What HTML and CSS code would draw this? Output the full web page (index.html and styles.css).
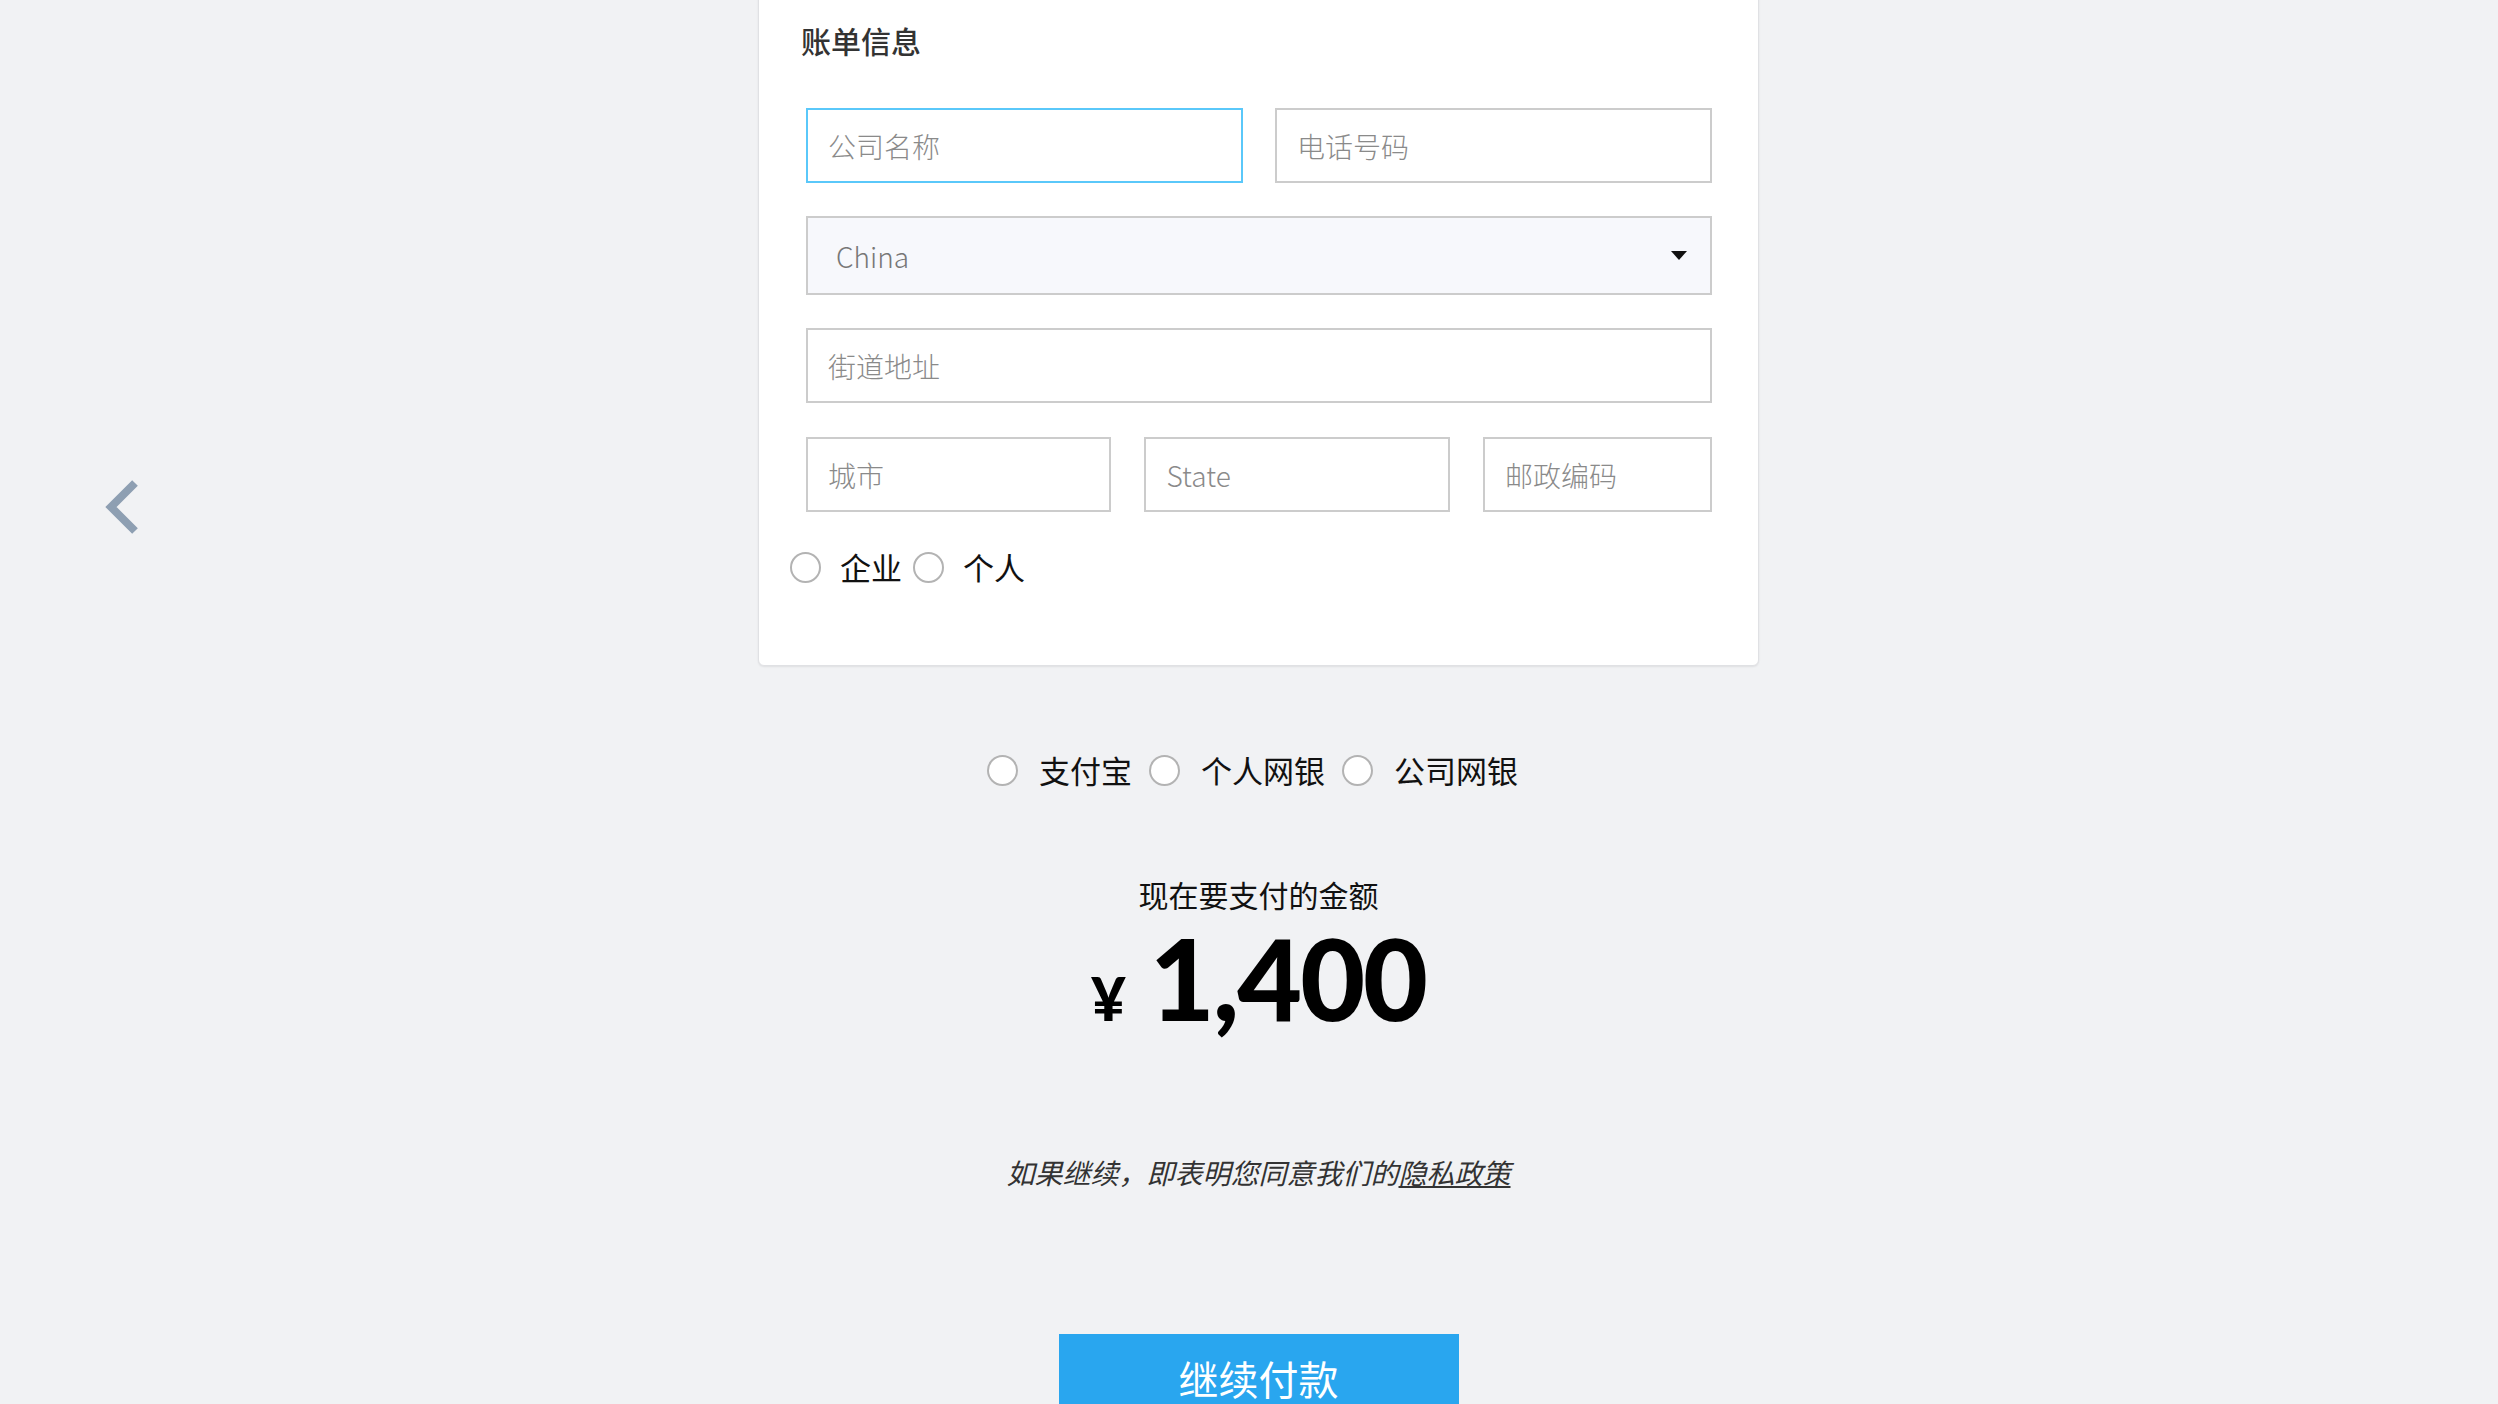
FILE: index.html
```html
<!DOCTYPE html>
<html lang="zh-CN">
<head>
    <meta charset="UTF-8">
    <meta name="viewport" content="width=device-width, initial-scale=1.0">
    <title>账单信息 - 付款</title>
    <link rel="stylesheet" href="styles.css">
</head>
<body>
    <a class="back-link" href="#" aria-label="返回">
        <svg width="40" height="60" viewBox="0 0 40 60">
            <polyline points="34,6 10,30 34,54" fill="none" stroke="#8e9fb2" stroke-width="8"></polyline>
        </svg>
    </a>

    <main class="checkout">
        <section class="card">
            <h2 class="card-title">账单信息</h2>

            <div class="fields">
                <div class="row row-two">
                    <input class="field is-active" type="text" placeholder="公司名称" autofocus>
                    <input class="field" type="text" placeholder="电话号码">
                </div>

                <div class="select-wrap">
                    <select class="field field-select">
                        <option>China</option>
                    </select>
                </div>

                <input class="field" type="text" placeholder="街道地址">

                <div class="row row-three">
                    <input class="field" type="text" placeholder="城市">
                    <input class="field" type="text" placeholder="State">
                    <input class="field" type="text" placeholder="邮政编码">
                </div>
            </div>

            <div class="radio-group card-radios">
                <label class="radio"><input type="radio" name="customer-type"><span>企业</span></label>
                <label class="radio"><input type="radio" name="customer-type"><span>个人</span></label>
            </div>
        </section>

        <div class="radio-group pay-methods">
            <label class="radio"><input type="radio" name="pay-method"><span>支付宝</span></label>
            <label class="radio"><input type="radio" name="pay-method"><span>个人网银</span></label>
            <label class="radio"><input type="radio" name="pay-method"><span>公司网银</span></label>
        </div>

        <div class="amount">
            <p class="amount-label">现在要支付的金额</p>
            <p class="amount-value"><span class="currency">¥</span><span class="sum">1,400</span></p>
        </div>

        <p class="terms">如果继续，即表明您同意我们的<a href="#">隐私政策</a></p>

        <button class="pay-button">继续付款</button>
    </main>
</body>
</html>
```

FILE: styles.css
```css
body {
    margin: 0;
    background-color: #f1f2f4;
    font-family: "Noto Sans CJK SC", "Noto Sans", sans-serif;
    color: #111;
    overflow: hidden;
}

.back-link {
    position: fixed;
    left: 101px;
    top: 477px;
    display: block;
}

.checkout {
    width: 1001px;
    margin-left: calc(50% - 491px);
}

.card {
    margin-top: -10px;
    padding: 31px 46px 76px 47px;
    background-color: white;
    border: 1px solid #e0e1e4;
    border-radius: 6px;
    box-shadow: 0 1px 2px rgba(0, 0, 0, 0.08);
}

.card-title {
    margin: 0 0 50px -5px;
    font-size: 30px;
    line-height: 36px;
    font-weight: 500;
    color: #333;
}

.fields {
    display: grid;
    row-gap: 33px;
}

.row {
    display: grid;
    column-gap: 32px;
}

.row-two {
    grid-template-columns: 1fr 1fr;
}

.row-three {
    grid-template-columns: 4fr 4fr 3fr;
    column-gap: 33px;
    margin-top: 1px;
}

.field {
    box-sizing: border-box;
    width: 100%;
    height: 75px;
    padding: 0 20px;
    border: 2px solid #cccccc;
    border-radius: 0;
    background-color: white;
    font-family: inherit;
    font-size: 28px;
    font-weight: 300;
    color: #555;
    outline: none;
}

.field::placeholder {
    color: #8a8a8a;
}

.field.is-active,
.field:focus {
    border-color: #5ac8fa;
}

.select-wrap {
    position: relative;
}

.field-select {
    height: 79px;
    padding-left: 28px;
    appearance: none;
    -webkit-appearance: none;
    background-color: #f7f8fc;
    color: #777;
}

.select-wrap::after {
    content: "";
    position: absolute;
    right: 25px;
    top: 35px;
    border-left: 8px solid transparent;
    border-right: 8px solid transparent;
    border-top: 9px solid #111;
    pointer-events: none;
}

.radio-group {
    display: flex;
    align-items: center;
}

.radio {
    display: flex;
    align-items: center;
    font-size: 31px;
    line-height: 44px;
    cursor: pointer;
}

.radio input {
    appearance: none;
    -webkit-appearance: none;
    box-sizing: border-box;
    width: 31px;
    height: 31px;
    margin: 0 19px 0 0;
    border: 2px solid #b3b3b3;
    border-radius: 50%;
    background-color: white;
}

.card-radios {
    margin: 33px 0 0 -16px;
    gap: 11px;
}

.pay-methods {
    justify-content: center;
    margin: 82px 0 0 -12px;
    gap: 17px;
}

.pay-methods .radio input {
    margin-right: 21px;
}

.amount {
    margin-top: 84px;
    text-align: center;
}

.amount-label {
    margin: 0;
    font-size: 30px;
    line-height: 36px;
    color: #111;
}

.amount-value {
    margin: 10px 0 0;
    font-family: Lato, "Liberation Sans", sans-serif;
    font-weight: 900;
    line-height: 1;
    color: #000;
}

.currency {
    margin-right: 24px;
    font-size: 60px;
}

.sum {
    font-size: 112px;
    letter-spacing: -2px;
}

.terms {
    margin: 121px 0 0;
    text-align: center;
    font-size: 28px;
    line-height: 34px;
    font-style: italic;
    color: #333;
}

.terms a {
    color: #333;
    text-decoration: underline;
}

.pay-button {
    display: block;
    width: 400px;
    height: 88px;
    margin: 145px auto 0;
    border: none;
    background-color: #29a6ef;
    color: white;
    font-family: inherit;
    font-size: 40px;
    cursor: pointer;
}
```
